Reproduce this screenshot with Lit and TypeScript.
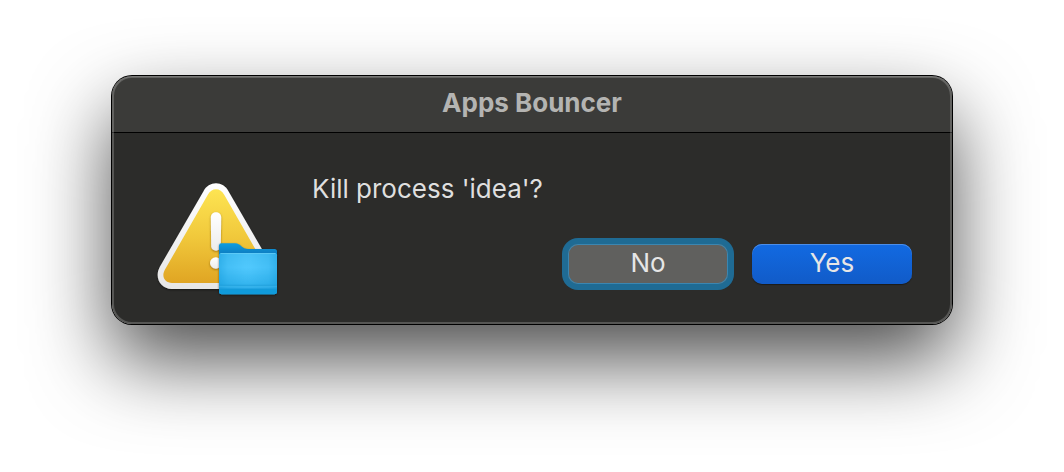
import { LitElement, html, css } from "lit";
import { customElement, property } from "lit/decorators.js";

@customElement("warning-icon")
class WarningIcon extends LitElement {
  static styles = css`
    :host { display: block; flex: none; }
    .icon { display: block; width: 128px; height: 127px; }
  `;

  render() {
    return html`
      <svg class="icon" viewBox="0 0 128 127" role="img" aria-label="Warning">
        <defs>
          <linearGradient id="rim" x1="0" y1="0" x2="0" y2="1">
            <stop offset="0" stop-color="#ffffff" />
            <stop offset="1" stop-color="#e6e6e6" />
          </linearGradient>
          <linearGradient id="gold" x1="0" y1="0" x2="0" y2="1">
            <stop offset="0" stop-color="#fde452" />
            <stop offset="0.5" stop-color="#f1c93c" />
            <stop offset="1" stop-color="#e0a523" />
          </linearGradient>
          <linearGradient id="mark" x1="0" y1="0" x2="0" y2="1">
            <stop offset="0" stop-color="#ffffff" />
            <stop offset="1" stop-color="#ececec" />
          </linearGradient>
          <linearGradient id="back" x1="0" y1="0" x2="0" y2="1">
            <stop offset="0" stop-color="#0d9ee0" />
            <stop offset="0.2" stop-color="#0780c4" />
            <stop offset="1" stop-color="#0780c4" />
          </linearGradient>
          <linearGradient id="front" x1="0" y1="0" x2="0" y2="1">
            <stop offset="0" stop-color="#48c1f6" />
            <stop offset="0.35" stop-color="#50c8fd" />
            <stop offset="1" stop-color="#25a9e6" />
          </linearGradient>
          <linearGradient id="sides" x1="0" y1="0" x2="1" y2="0">
            <stop offset="0" stop-color="#0790d2" stop-opacity="0.4" />
            <stop offset="0.15" stop-color="#0790d2" stop-opacity="0.15" />
            <stop offset="0.45" stop-color="#0790d2" stop-opacity="0" />
            <stop offset="0.55" stop-color="#0790d2" stop-opacity="0" />
            <stop offset="0.85" stop-color="#0790d2" stop-opacity="0.15" />
            <stop offset="1" stop-color="#0790d2" stop-opacity="0.4" />
          </linearGradient>
          <filter id="soft" x="-20%" y="-20%" width="140%" height="140%">
            <feDropShadow dx="0" dy="1" stdDeviation="1" flood-color="#000" flood-opacity="0.5" />
          </filter>
          <filter id="raised" x="-50%" y="-50%" width="200%" height="200%">
            <feDropShadow dx="0" dy="1" stdDeviation="0.8" flood-color="#7a5200" flood-opacity="0.7" />
          </filter>
        </defs>
        <path filter="url(#soft)" fill="url(#rim)"
          d="M51.4 18.5C56.8 7.6 71.2 7.6 76.6 18.5L120 93.5C126.2 104.6 119.4 116 108.3 116H19.7C8.6 116 1.8 104.6 8 93.5Z" />
        <path fill="url(#gold)"
          d="M55.8 21.8C59.2 14.3 68.8 14.3 72.2 21.8L115 96.5C119.2 103.8 114.8 110 108 110H20C13.2 110 8.8 103.8 13 96.5Z" />
        <g filter="url(#raised)" fill="url(#mark)">
          <path d="M58.8 44.6C58.8 37.6 69.2 37.6 69.2 44.6L68.8 73.5C68.6 79 59.4 79 59.2 73.5Z" />
          <circle cx="63.8" cy="90" r="5.8" />
        </g>
        <g filter="url(#soft)">
          <path fill="url(#back)"
            d="M67 72.5Q67 70.2 69.5 70.2H83C89 70.2 89.5 76 96.5 76H122.5Q125 76 125 78.5V118H67Z" />
          <path fill="url(#front)"
            d="M67 82.5Q67 80 69.5 80H122.5Q125 80 125 82.5V118.8Q125 121.2 122.5 121.2H69.5Q67 121.2 67 118.8Z" />
        </g>
        <path fill="url(#sides)"
          d="M67 82.5Q67 80 69.5 80H122.5Q125 80 125 82.5V118.8Q125 121.2 122.5 121.2H69.5Q67 121.2 67 118.8Z" />
        <path fill="#109bdb" d="M67 116H125V118.8Q125 121.2 122.5 121.2H69.5Q67 121.2 67 118.8Z" />
        <path fill="none" stroke="#1b9bd7" stroke-width="0.8" d="M67 112.3H125M67 115.9H125" />
        <path fill="none" stroke="#62cdf7" stroke-width="0.8" d="M68.5 80.5H123.5" />
        <path fill="none" stroke="#38b4ea" stroke-width="0.8" d="M67 113.2H125" />
      </svg>
    `;
  }
}

@customElement("dialog-window")
class DialogWindow extends LitElement {
  @property() heading = "";
  @property() message = "";

  static styles = css`
    :host { display: block; }
    .window {
      position: relative;
      display: block;
      border-radius: 20px;
      overflow: clip;
      background: #2c2c2a;
      color: #dfdfdf;
      font: 26px/32px Inter, "Liberation Sans", sans-serif;
    }
    .shadow {
      border-radius: 20px;
      box-shadow: 0 0 0 1px #000, 0 36px 80px rgba(0, 0, 0, 0.7);
    }
    .window::after {
      content: "";
      position: absolute;
      inset: 0;
      border-radius: 20px;
      pointer-events: none;
      box-shadow: inset 0 0 0 2px rgba(255, 255, 255, 0.2), inset 0 1px 0 rgba(255, 255, 255, 0.15);
    }
    .titlebar {
      padding: 11px 40px 13px;
      background: #3b3b39;
      border-bottom: 1px solid #000;
    }
    .title {
      margin: 0;
      font-size: 26px;
      line-height: 32px;
      font-weight: 700;
      text-align: center;
      color: #b4b4b2;
    }
    .body {
      display: flex;
      gap: 32px;
      padding: 40px 40px 24px;
    }
    .content {
      flex: 1;
      display: flex;
      flex-direction: column;
      justify-content: space-between;
      padding-bottom: 16px;
    }
    .message { margin: 0; }
    .actions {
      display: flex;
      justify-content: flex-end;
      gap: 24px;
    }
    .button {
      width: 160px;
      height: 40px;
      padding: 0 0 2px;
      border: 0;
      border-radius: 10px;
      font: inherit;
      color: #e6e6e6;
    }
    .focused {
      background: #60605e;
      outline: none;
      box-shadow: inset 0 0 0 1px #3b86b1, 0 0 0 6px #1f6b94;
    }
    .primary {
      background: linear-gradient(#126ae2, #115bc8);
      box-shadow: inset 0 1px 0 #4c8ee9, 0 1px 1px rgba(0, 0, 0, 0.4);
    }
  `;

  render() {
    return html`
      <div class="shadow">
        <section class="window" role="alertdialog" aria-labelledby="title" aria-describedby="message">
          <header class="titlebar"><h1 class="title" id="title">${this.heading}</h1></header>
          <div class="body">
            <warning-icon></warning-icon>
            <div class="content">
              <p class="message" id="message">${this.message}</p>
              <div class="actions">
                <button class="button focused" type="button">No</button>
                <button class="button primary" type="button">Yes</button>
              </div>
            </div>
          </div>
        </section>
      </div>
    `;
  }
}

@customElement("app-root")
class AppRoot extends LitElement {
  static styles = css`
    :host {
      display: block;
      box-sizing: border-box;
      min-height: 100vh;
      padding: 76px 112px;
      overflow: clip;
      background: #fff;
    }
  `;

  render() {
    return html`<dialog-window heading="Apps Bouncer" message="Kill process 'idea'?"></dialog-window>`;
  }
}
